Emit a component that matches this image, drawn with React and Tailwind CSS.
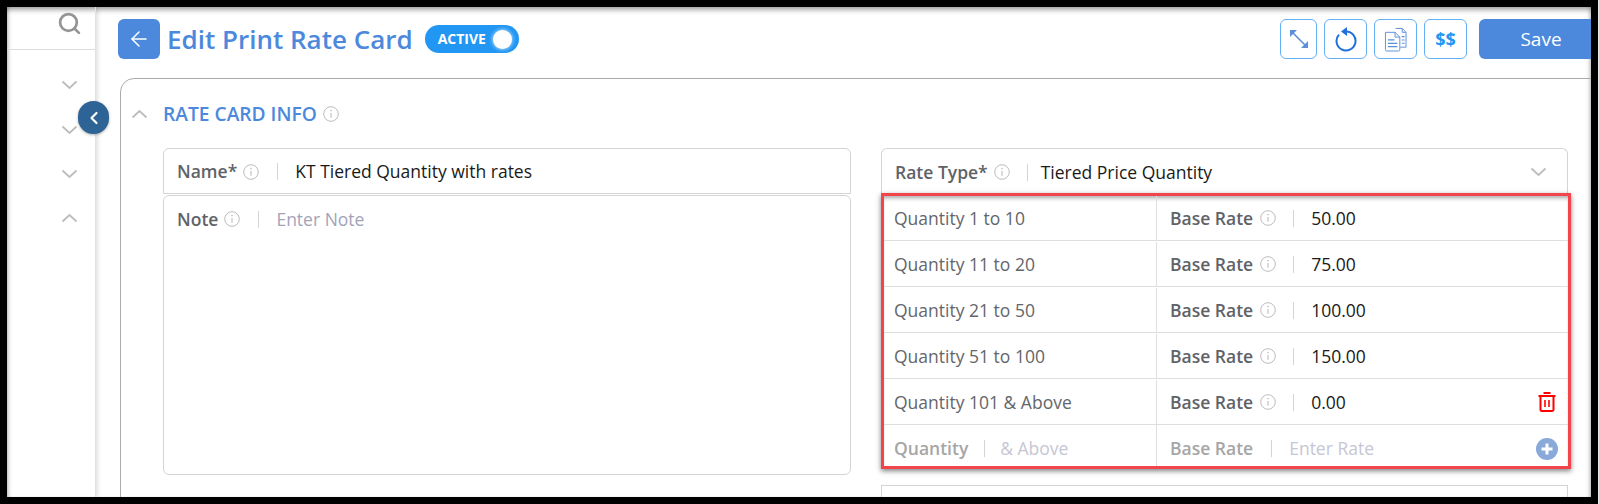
import { ArrowLeft, ChevronLeft, Search } from "lucide-react";

const FONT = "font-['Open_Sans','Noto_Sans',sans-serif]";

const TIERS = [
  { label: "Quantity 1 to 10", rate: "50.00", h: "h-[45px]" },
  { label: "Quantity 11 to 20", rate: "75.00", h: "h-[46px] pt-[1px]" },
  { label: "Quantity 21 to 50", rate: "100.00", h: "h-[46px] pt-[1px]" },
  { label: "Quantity 51 to 100", rate: "150.00", h: "h-[46px] pt-[1px]" },
  { label: "Quantity 101 & Above", rate: "0.00", h: "h-[46px] pt-[1px]", removable: true },
];

function InfoIcon({ className = "" }) {
  return (
    <svg width="16" height="16" viewBox="0 0 16 16" fill="none" className={`shrink-0 ${className}`}>
      <circle cx="8" cy="8" r="7.3" stroke="#bcbcbc" strokeWidth="1" />
      <path d="M8 7v4.8" stroke="#bcbcbc" strokeWidth="1.1" />
      <circle cx="8" cy="4.6" r="0.8" fill="#bcbcbc" />
    </svg>
  );
}

function Chevron({ up = false, className = "" }) {
  return (
    <svg width="17" height="10" viewBox="0 0 17 10" fill="none" className={`shrink-0 ${className}`}>
      <path d={up ? "M1.5 8.5 8.5 2l7 6.5" : "M1.5 1.5 8.5 8l7-6.5"} stroke="#bdbdbd" strokeWidth="1.8" />
    </svg>
  );
}

function Pipe({ className = "" }) {
  return <span className={`w-px h-[17px] bg-[#d4d4d4] shrink-0 ${className}`} />;
}

function ExpandIcon() {
  return (
    <svg width="20" height="20" viewBox="0 0 20 20" fill="none">
      <path d="M3 3l14 14" stroke="#5b8fd9" strokeWidth="1.6" />
      <path d="M1 8V1h7z" fill="#5b8fd9" />
      <path d="M19 12v7h-7z" fill="#5b8fd9" />
    </svg>
  );
}

function ResetIcon() {
  return (
    <svg width="24" height="26" viewBox="0 0 24 26" fill="none">
      <path d="M12 5.5A9.5 9.5 0 1 1 5 8.6" stroke="#1f6fdc" strokeWidth="2" />
      <path d="M13 1 7 5.5l6 4.5z" fill="#1f6fdc" />
    </svg>
  );
}

function CopyIcon() {
  return (
    <svg width="23" height="25" viewBox="0 0 24 26" fill="none" stroke="#5b8fd9" strokeWidth="1">
      <path d="M12 1.5h7l4 4v15.5h-6" />
      <path d="M19 1.5v4h4" />
      <path d="M1.5 5.5h10l5 5v13a1.5 1.5 0 0 1-1.5 1.5H3a1.5 1.5 0 0 1-1.5-1.5z" fill="#fff" />
      <path d="M11.5 5.5v5h5" />
      <path d="M4 13.5h7M4 17h10M4 20.5h10" strokeWidth="1.3" />
      <path d="M18.5 10h3M18.5 13.5h3M18.5 17h3" strokeWidth="1.1" />
    </svg>
  );
}

function TrashIcon() {
  return (
    <svg width="18" height="20" viewBox="0 0 18 20" fill="none" stroke="#ff0000" strokeWidth="2">
      <path d="M0.5 4h17" />
      <path d="M5.5 1h7" />
      <path d="M2.5 4v13.5A1.5 1.5 0 0 0 4 19h10a1.5 1.5 0 0 0 1.5-1.5V4" />
      <path d="M7 8v7M11 8v7" strokeWidth="1.6" />
    </svg>
  );
}

function PlusIcon() {
  return (
    <svg width="22" height="22" viewBox="0 0 22 22">
      <circle cx="11" cy="11" r="11" fill="#88a9d9" />
      <path d="M11 5.5v11M5.5 11h11" stroke="#fff" strokeWidth="3" />
    </svg>
  );
}

function IconButton({ width, children }) {
  return (
    <button className={`${width} h-[40px] flex items-center justify-center rounded-md border border-[#64b0f5] bg-white`}>
      {children}
    </button>
  );
}

function TierRow({ tier }) {
  return (
    <div className={`flex ${tier.h} border-b border-[#dedede] text-[17.5px]`}>
      <div className="w-[273px] shrink-0 flex items-center pl-[10px] border-r border-[#dedede] text-[#63666a]">
        {tier.label}
      </div>
      <div className="flex-1 flex items-center pl-[13px] pr-[11px]">
        <span className="font-semibold text-[#5f6368]">Base Rate</span>
        <InfoIcon className="ml-[7px]" />
        <Pipe className="ml-[17px]" />
        <span className="ml-[17px] text-[#1a1a1a]">{tier.rate}</span>
        {tier.removable && (
          <span className="ml-auto mr-[1px] flex">
            <TrashIcon />
          </span>
        )}
      </div>
    </div>
  );
}

export default function App() {
  return (
    <div className={`w-[1599px] h-[504px] bg-black pt-[7px] pb-[7px] pl-[7px] pr-[8px] overflow-hidden relative ${FONT}`}>
      <div className="relative h-full bg-white flex overflow-hidden shadow-[inset_0_6px_5px_-3px_rgba(0,0,0,0.35),inset_4px_0_4px_-3px_rgba(0,0,0,0.3),inset_-4px_0_4px_-3px_rgba(0,0,0,0.3)]">
        {/* Sidebar */}
        <aside className="w-[89px] shrink-0 h-full border-r border-[#e2e2e2] shadow-[2px_0_4px_rgba(0,0,0,0.12)]">
          <div className="h-[43px] border-b border-[#dcdcdc] flex justify-end pt-[4px] pr-[13px]">
            <Search size={25} color="#949494" strokeWidth={2.6} />
          </div>
          <div className="pt-[13px] flex flex-col items-end pr-[17px]">
            <div className="h-[44px] flex items-center"><Chevron /></div>
            <div className="h-[45px] flex items-center"><Chevron /></div>
            <div className="h-[44px] flex items-center"><Chevron /></div>
            <div className="h-[43px] flex items-center"><Chevron up /></div>
          </div>
        </aside>

        {/* Collapse handle */}
        <button className="absolute left-[71px] top-[94px] w-[31px] h-[33px] rounded-full bg-[#2e6396] flex items-center justify-center shadow-[0_1px_3px_rgba(0,0,0,0.3)]">
          <ChevronLeft size={20} color="#fff" strokeWidth={2.6} />
        </button>

        {/* Main */}
        <main className="flex-1 min-w-0 overflow-hidden pt-[12px]">
          <header className="flex items-center h-[40px] pl-[22px] -mr-[12px]">
            <button className="w-[42px] h-[40px] shrink-0 rounded-md bg-[#4c89dc] flex items-center justify-center">
              <ArrowLeft size={24} color="#fff" strokeWidth={1.5} />
            </button>
            <h1 className="ml-[7px] text-[26px] leading-none font-semibold text-[#4c89dc] whitespace-nowrap">Edit Print Rate Card</h1>
            <div className="ml-[12px] w-[94px] h-[28px] rounded-full bg-[#2196f3] flex items-center justify-between pl-[13px] pr-[7px]">
              <span className="text-[14px] font-bold text-white leading-none">ACTIVE</span>
              <span className="w-[19px] h-[19px] rounded-full bg-white shadow-[0_0_4px_rgba(255,255,255,0.9)]" />
            </div>
            <div className="ml-auto flex items-center gap-[7px]">
              <IconButton width="w-[37px]"><ExpandIcon /></IconButton>
              <IconButton width="w-[43px]"><ResetIcon /></IconButton>
              <IconButton width="w-[43px]"><CopyIcon /></IconButton>
              <IconButton width="w-[43px]">
                <span className="text-[18px] font-bold text-[#2196f3] leading-none">$$</span>
              </IconButton>
              <button className="ml-[5px] w-[124px] h-[40px] rounded-l-md bg-[#4c89dc] text-white text-[19px]">Save</button>
            </div>
          </header>

          <section className="mt-[19px] ml-[24px] w-[1500px] h-[500px] border border-[#ababab] rounded-tl-[14px]">
            <div className="flex items-center h-[28px] mt-[21px] pl-[10px]">
              <Chevron up />
              <h2 className="ml-[15px] text-[19.2px] leading-none font-semibold text-[#4c89dc] whitespace-nowrap">RATE CARD INFO</h2>
              <InfoIcon className="ml-[6px]" />
            </div>

            <div className="mt-[20px] pl-[42px] grid grid-cols-[688px_687px] gap-x-[30px] items-start">
              {/* Left column */}
              <div>
                <div className="h-[46px] flex items-center pl-[13px] pt-[1px] border border-[#d4d4d4] rounded-t-md text-[17.5px]">
                  <span className="font-semibold text-[#5f6368]">Name*</span>
                  <InfoIcon className="ml-[6px]" />
                  <Pipe className="ml-[18px]" />
                  <span className="ml-[17px] text-[#1a1a1a]">KT Tiered Quantity with rates</span>
                </div>
                <div className="mt-[1px] h-[280px] flex items-start pt-[11px] pl-[13px] border border-[#d4d4d4] rounded-md text-[17.5px]">
                  <span className="font-semibold text-[#5f6368] leading-[24px]">Note</span>
                  <span className="h-[24px] flex items-center"><InfoIcon className="ml-[6px]" /></span>
                  <span className="h-[24px] flex items-center"><Pipe className="ml-[18px]" /></span>
                  <span className="ml-[17px] text-[#a3a3b8] leading-[24px]">Enter Note</span>
                </div>
              </div>

              {/* Right column */}
              <div>
                <div className="h-[45px] flex items-center pl-[13px] pr-[20px] pt-[2px] border border-b-0 border-[#d4d4d4] rounded-t-md text-[17.5px]">
                  <span className="font-semibold text-[#5f6368]">Rate Type*</span>
                  <InfoIcon className="ml-[6px]" />
                  <Pipe className="ml-[17px]" />
                  <span className="ml-[13px] text-[#1a1a1a]">Tiered Price Quantity</span>
                  <Chevron className="ml-auto" />
                </div>
                <div className="-mr-[3px] h-[276px] border-[3px] border-[#f4444b] shadow-[0_2px_5px_rgba(0,0,0,0.5),inset_0_4px_4px_-2px_rgba(0,0,0,0.35)] bg-white">
                  {TIERS.map((tier) => (
                    <TierRow key={tier.label} tier={tier} />
                  ))}
                  <div className="flex h-[41px] text-[17.5px]">
                    <div className="w-[273px] shrink-0 flex items-center pl-[10px] pt-[6px] border-r border-[#dedede]">
                      <span className="font-semibold text-[#a6a6a6]">Quantity</span>
                      <Pipe className="ml-[16px]" />
                      <span className="ml-[15px] text-[#c6c6d4]">&amp; Above</span>
                    </div>
                    <div className="flex-1 flex items-center pl-[13px] pr-[10px] pt-[6px]">
                      <span className="font-semibold text-[#a6a6a6]">Base Rate</span>
                      <Pipe className="ml-[18px]" />
                      <span className="ml-[17px] text-[#c6c6d4]">Enter Rate</span>
                      <span className="ml-auto flex"><PlusIcon /></span>
                    </div>
                  </div>
                </div>
                <div className="mt-[16px] h-[60px] border border-[#d4d4d4]" />
              </div>
            </div>
          </section>
        </main>
      </div>
      <div className="absolute right-0 top-0 bottom-0 w-px bg-[#e8e8e8]" />
    </div>
  );
}
